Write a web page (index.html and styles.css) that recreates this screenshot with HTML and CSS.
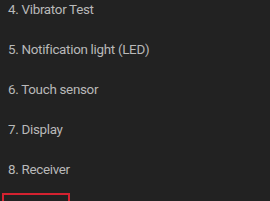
FILE: index.html
```html
<html lang="en">
<head>
  <meta charset="UTF-8">
  <title>Hardware Test</title>
  <link rel="stylesheet" href="styles.css">
</head>
<body>

  <!-- Test list, scrolled part way down -->
  <ul id="tests">
    <li class="test">4. Vibrator Test</li>
    <li class="test">5. Notification light (LED)</li>
    <li class="test">6. Touch sensor</li>
    <li class="test">7. Display</li>
    <li class="test">8. Receiver</li>
    <li class="test">
      <div class="focus-box"></div>
    </li>
  </ul>

</body>
</html>
```

FILE: styles.css
```css
html,
body {
  background-color: #222222;
  font-family: Roboto, "Noto Sans", sans-serif;
  font-size: 13.4px;
  letter-spacing: -0.3px;
  color: #b9b9b9;
  height: 100%;
  margin: 0;
  overflow: hidden;
}

#tests {
  list-style: none;
  margin: -10px 0 0 0;
  padding: 0;
}

.test {
  height: 40px;
  line-height: 40px;
  padding-left: 8px;
  white-space: nowrap;
}

.test:last-child {
  padding: 3px 0 0 2px;
}

.focus-box {
  border: 2px solid #d42230;
  height: 30px;
  width: 64px;
}
```
